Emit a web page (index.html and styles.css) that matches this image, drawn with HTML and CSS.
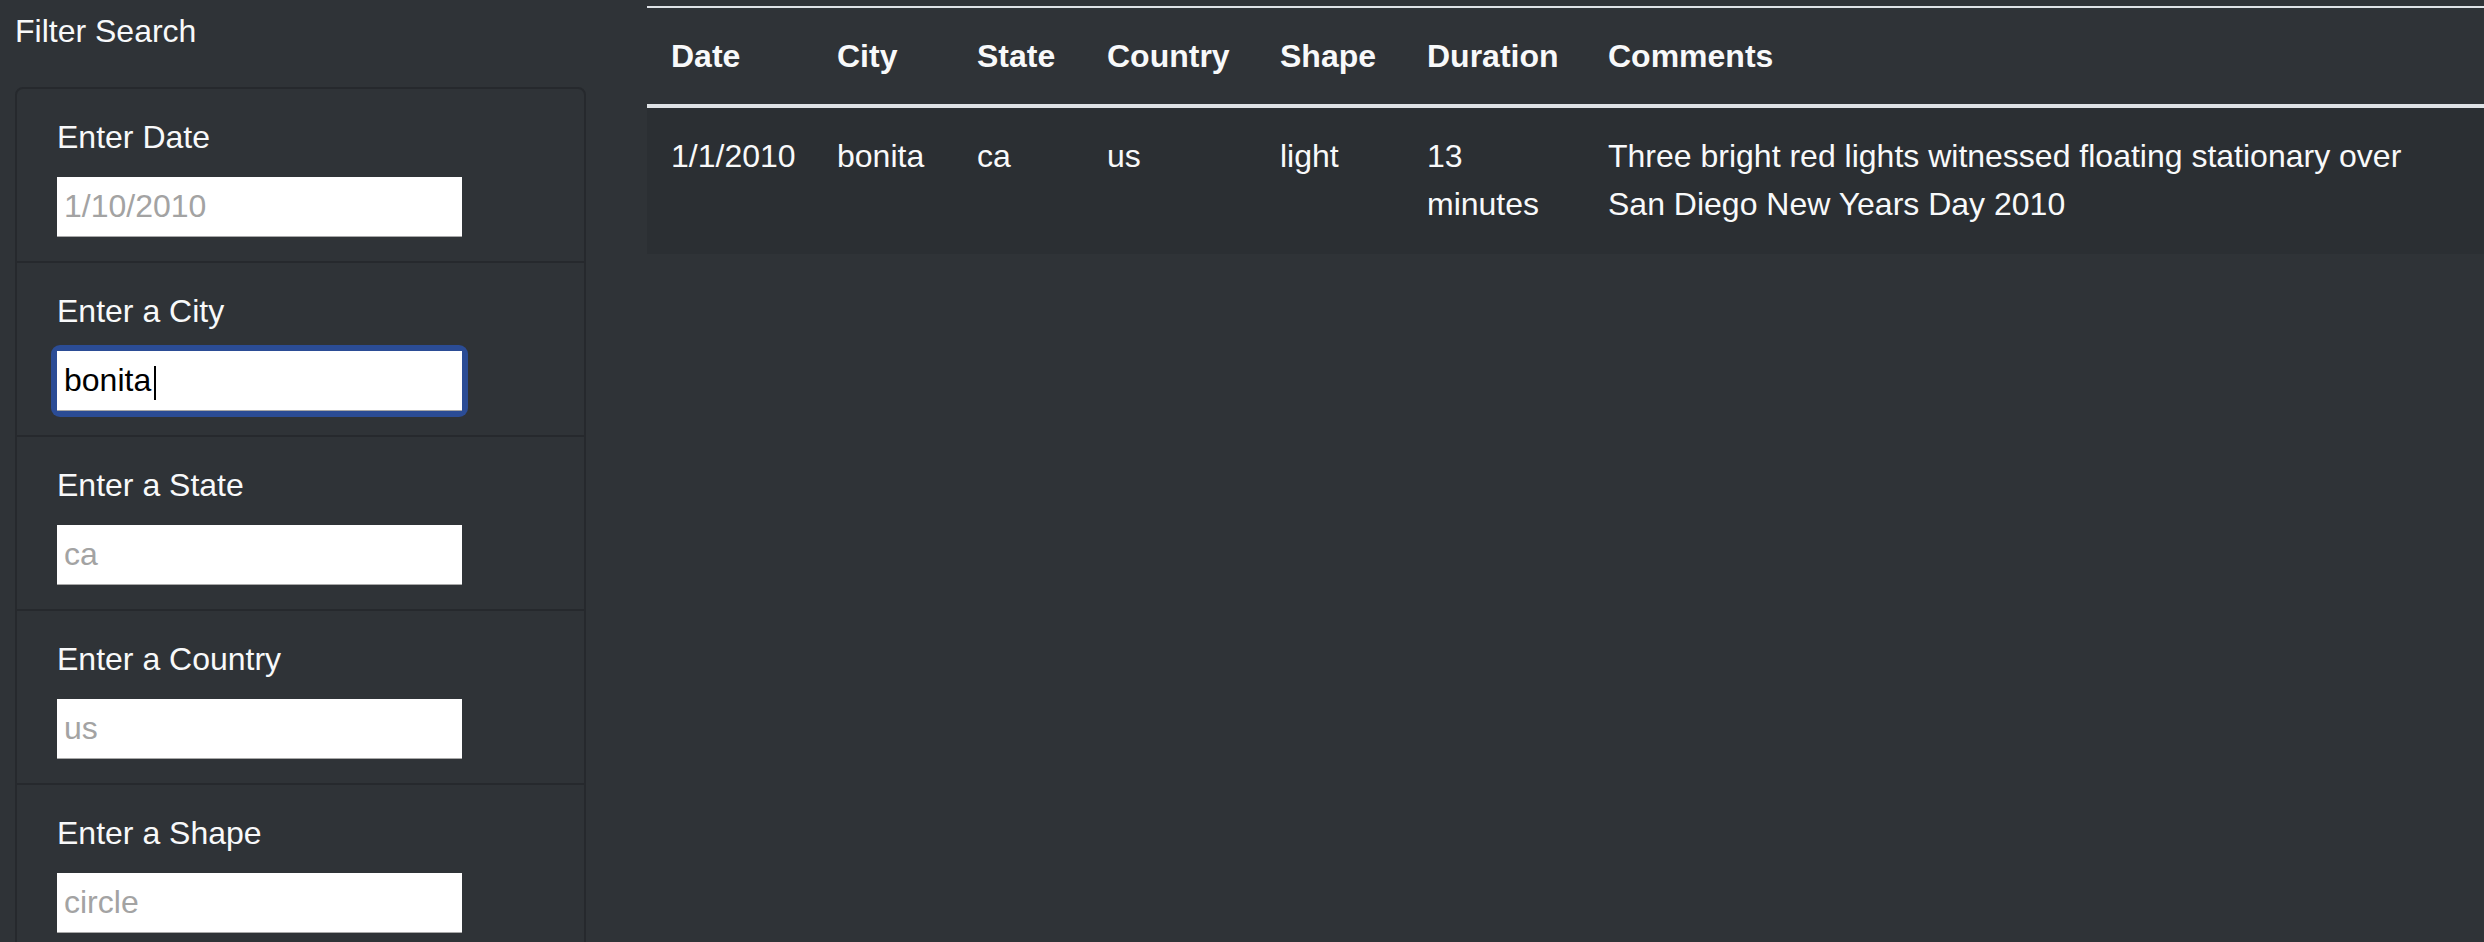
FILE: index.html
```html
<!DOCTYPE html>
<html lang="en">
<head>
<meta charset="utf-8">
<title>UFO Sightings</title>
<link rel="stylesheet" href="styles.css">
</head>
<body>
<div class="page">
  <aside class="sidebar">
    <h5 class="title">Filter Search</h5>
    <div class="card">
      <ul class="list">
        <li class="item">
          <label class="label" for="datetime">Enter Date</label>
          <input class="field" type="text" id="datetime" placeholder="1/10/2010">
        </li>
        <li class="item">
          <label class="label" for="city">Enter a City</label>
          <span class="ring"><input class="field" type="text" id="city" value="bonita"></span>
        </li>
        <li class="item">
          <label class="label" for="state">Enter a State</label>
          <input class="field" type="text" id="state" placeholder="ca">
        </li>
        <li class="item">
          <label class="label" for="country">Enter a Country</label>
          <input class="field" type="text" id="country" placeholder="us">
        </li>
        <li class="item">
          <label class="label" for="shape">Enter a Shape</label>
          <input class="field" type="text" id="shape" placeholder="circle">
        </li>
      </ul>
    </div>
  </aside>
  <main class="main">
    <table class="table">
      <colgroup>
        <col class="c-date">
        <col class="c-city">
        <col class="c-state">
        <col class="c-country">
        <col class="c-shape">
        <col class="c-duration">
        <col class="c-comments">
      </colgroup>
      <thead>
        <tr>
          <th>Date</th>
          <th>City</th>
          <th>State</th>
          <th>Country</th>
          <th>Shape</th>
          <th>Duration</th>
          <th>Comments</th>
        </tr>
      </thead>
      <tbody>
        <tr class="odd">
          <td>1/1/2010</td>
          <td>bonita</td>
          <td>ca</td>
          <td>us</td>
          <td>light</td>
          <td>13 minutes</td>
          <td>Three bright red lights witnessed floating stationary over San Diego New Years Day 2010</td>
        </tr>
      </tbody>
    </table>
  </main>
</div>
</body>
</html>
```
FILE: styles.css
```css
html, body {
  margin: 0;
  padding: 0;
  background: #2f3337;
  height: 100%;
  overflow: hidden;
}

body {
  font-family: "Liberation Sans", Arial, sans-serif;
  font-size: 32px;
  line-height: 48px;
  color: #f8f9fa;
}

.page {
  display: flex;
  align-items: flex-start;
  gap: 61px;
}

.sidebar {
  width: 571px;
  padding-left: 15px;
  padding-top: 7px;
  flex: none;
}

.title {
  margin: 0 0 32px 0;
  font-size: 32px;
  font-weight: 400;
  line-height: 48px;
}

.card {
  border: 2px solid #26292d;
  border-radius: 8px;
  overflow: hidden;
}

.list {
  list-style: none;
  margin: 0;
  padding: 0;
}

.item {
  display: flex;
  flex-direction: column;
  align-items: flex-start;
  padding: 24px 40px 24px 40px;
}

.item + .item {
  border-top: 2px solid #26292d;
}

.label {
  display: block;
  margin-bottom: 16px;
}

.field {
  box-sizing: border-box;
  width: 405px;
  height: 60px;
  margin: 0;
  padding: 0 7px;
  border: 0;
  border-bottom: 1px solid #a8a8a8;
  border-radius: 0;
  background: #fff;
  color: #000;
  font-family: "Liberation Sans", Arial, sans-serif;
  font-size: 32px;
}

.field::placeholder {
  color: #a3a3a3;
}

.field:focus {
  outline: none;
}

.ring {
  position: relative;
  display: block;
  padding: 6px;
  margin: -6px 0 -6px -6px;
  border-radius: 9px;
  background: #2b4c95;
}

.ring::after {
  content: "";
  position: absolute;
  left: 103px;
  top: 21px;
  width: 2px;
  height: 34px;
  background: #000;
}

.ring .field {
  display: block;
}

.main {
  flex: 1;
  min-width: 0;
  padding-top: 6px;
}

.table {
  width: 100%;
  table-layout: fixed;
  border-collapse: collapse;
  color: #f8f9fa;
}

.c-date { width: 166px; }
.c-city { width: 140px; }
.c-state { width: 130px; }
.c-country { width: 173px; }
.c-shape { width: 147px; }
.c-duration { width: 181px; }
.c-comments { width: auto; }

.table th,
.table td {
  padding: 24px;
  text-align: left;
  vertical-align: top;
  line-height: 48px;
}

.table td {
  padding-bottom: 26px;
}

.table th {
  font-weight: 700;
  border-top: 2px solid #dee2e6;
  border-bottom: 4px solid #dee2e6;
}

.table td {
  font-weight: 400;
}

.table tr.odd {
  background: #2b2f33;
}
```
